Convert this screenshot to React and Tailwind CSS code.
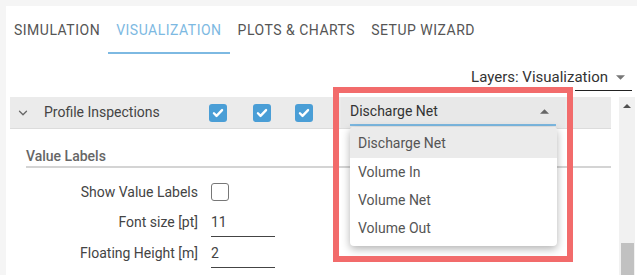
import { ChevronDown } from 'lucide-react';

const font = { fontFamily: 'Roboto, "Noto Sans", sans-serif' };

function Check() {
  return (
    <div className="w-[18px] h-[18px] rounded-[3px] bg-[#4a9ed6] flex items-center justify-center">
      <svg viewBox="0 0 24 24" className="w-[14px] h-[14px]" fill="none" stroke="white" strokeWidth="4" strokeLinecap="round" strokeLinejoin="round">
        <path d="M5 12.5l4.5 4.5L19 7" />
      </svg>
    </div>
  );
}

function Tri({ up, className }) {
  return (
    <svg viewBox="0 0 10 5" className={className}>
      <path d={up ? 'M0 5L5 0L10 5Z' : 'M0 0L5 5L10 0Z'} fill="currentColor" />
    </svg>
  );
}

const tabs = ['SIMULATION', 'VISUALIZATION', 'PLOTS & CHARTS', 'SETUP WIZARD'];
const options = ['Discharge Net', 'Volume In', 'Volume Net', 'Volume Out'];

export default function App() {
  return (
    <div className="relative w-[637px] h-[275px] overflow-hidden bg-[#f5f5f5] pt-[6px] pl-[6px]" style={font}>
      <div className="bg-white h-full flex flex-col">
        {/* Tabs */}
        <div className="flex h-[48px]">
          {tabs.map((t) => (
            <div
              key={t}
              className={`h-full flex items-center px-2 text-[14px] tracking-[0.5px] ${
                t === 'VISUALIZATION'
                  ? 'text-[#7db9e2] border-b-2 border-[#7db9e2] pt-[2px]'
                  : 'text-[#555]'
              }`}
            >
              {t}
            </div>
          ))}
        </div>

        {/* Layers select */}
        <div className="flex flex-col items-end pr-[5px] h-[38px]">
          <div className="flex items-center h-[32px] pt-[15px] mr-[4px] text-[15px] text-[#333]">
            <span>Layers: Visualization</span>
            <Tri className="w-[9px] h-[5px] ml-[8px] mr-[3px] text-[#777]" />
          </div>
          <div className="w-[57px] h-px bg-[#222] mt-[4px]" />
        </div>

        {/* Body */}
        <div className="flex flex-1 min-h-0 pl-[4px] mt-[5px]">
          <div className="relative w-[601px] flex flex-col">
            {/* Layer row */}
            <div className="flex items-center h-[32px] bg-[#ebebeb] border-b border-[#dcdcdc]">
              <ChevronDown className="w-[14px] h-[14px] ml-[6px] text-[#666]" strokeWidth={2.2} />
              <span className="ml-[14px] w-[165px] text-[14px] text-[#444]">Profile Inspections</span>
              <Check />
              <div className="ml-[26px]"><Check /></div>
              <div className="ml-[24px]"><Check /></div>
              <div className="ml-[28px] w-[224px] h-full bg-[#e8e8e8] px-[9px]">
                <div className="h-[29px] flex items-center justify-between border-b-2 border-[#7db9e2] pt-[1px]">
                  <span className="text-[14px] text-[#333]">Discharge Net</span>
                  <Tri up className="w-[9px] h-[5px] mr-[7px] text-[#666]" />
                </div>
              </div>
            </div>

            {/* Value Labels */}
            <div className="ml-[16px] mt-[17px] h-[22px] leading-[20px] text-[14px] font-medium text-[#666] border-b-2 border-[#d4d4d4]">
              Value Labels
            </div>

            <div className="flex flex-col mt-[9px] text-[14px] text-[#444]">
              <div className="flex items-center h-[30px]">
                <span className="w-[188px] text-right">Show Value Labels</span>
                <div className="ml-[13px] w-[18px] h-[18px] rounded-[3px] border border-[#777] bg-white" />
              </div>
              <div className="flex items-center h-[30px]">
                <span className="w-[188px] text-right">Font size [pt]</span>
                <div className="ml-[13px] w-[64px] h-[30px] flex items-center border-b border-[#444] pt-[1px]">11</div>
              </div>
              <div className="flex items-center h-[30px] mt-px">
                <span className="w-[188px] text-right">Floating Height [m]</span>
                <div className="ml-[13px] w-[64px] h-[30px] flex items-center border-b border-[#444] pt-[1px]">2</div>
              </div>
            </div>

            {/* Open menu */}
            <div className="absolute left-[340px] top-[30px] w-[207px] bg-white rounded-[4px] shadow-[0_3px_8px_rgba(0,0,0,0.3)] pb-[4px] text-[14px] text-[#555]">
              {options.map((o, i) => (
                <div
                  key={o}
                  className={`flex items-center px-[8px] ${i === 0 ? 'h-[31px] pt-[2px] bg-[#ebebeb] rounded-t-[4px]' : 'h-[28px]'}`}
                >
                  {o}
                </div>
              ))}
            </div>
          </div>

          {/* Scrollbar */}
          <div className="ml-[8px] w-[16px] bg-[#f1f1f1] flex flex-col items-center">
            <Tri up className="w-[8px] h-[4px] mt-[7px] text-[#505050]" />
            <div className="flex-1" />
            <div className="w-[13px] h-[32px] bg-[#c1c1c1]" />
          </div>
        </div>
      </div>

      {/* Highlight annotation */}
      <div className="absolute left-[333px] top-[87px] w-[240px] h-[175px] border-[6px] border-[#f26b6b] pointer-events-none" />
    </div>
  );
}
